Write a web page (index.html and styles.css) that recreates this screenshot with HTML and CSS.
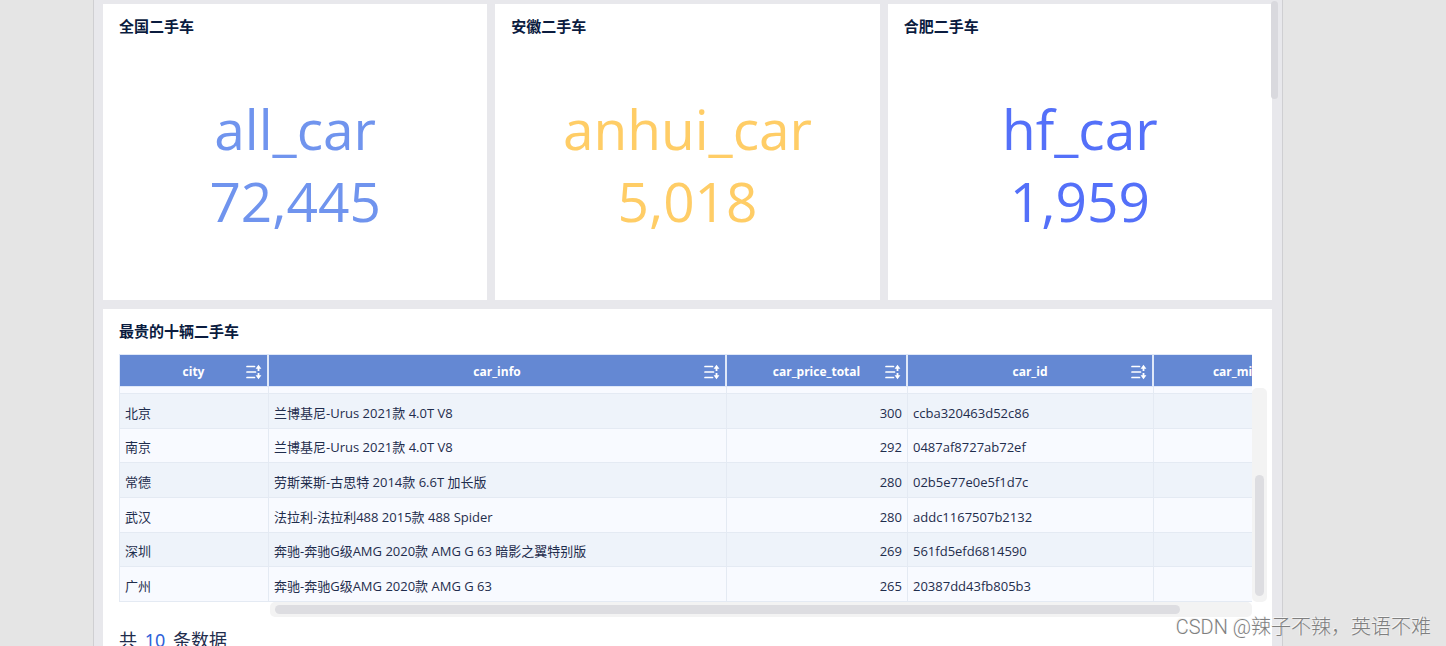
FILE: index.html
```html
<!DOCTYPE html>
<html lang="zh-CN">
<head>
<meta charset="utf-8">
<title>二手车数据</title>
<link rel="stylesheet" href="styles.css">
</head>
<body>
<svg class="defs" aria-hidden="true">
  <symbol id="sort" viewBox="0 0 16 16">
    <path d="M1 2.500h7.500M1 8h8.500M1 13.500h7.500" fill="none" stroke="currentColor" stroke-width="1.700" stroke-linecap="round"/>
    <path d="M12.500 3v4M12.500 9v4" fill="none" stroke="currentColor" stroke-width="1.800"/>
    <path d="M12.500 .7l2.900 4.100h-5.800zM12.500 15.300l2.900-4.100h-5.800z" fill="currentColor"/>
  </symbol>
</svg>
<main class="board">
  <section class="stats">
    <article class="card stat">
      <h2 class="title">全国二手车</h2>
      <div class="figure blue"><div>all_car</div><div>72,445</div></div>
    </article>
    <article class="card stat">
      <h2 class="title">安徽二手车</h2>
      <div class="figure yellow"><div>anhui_car</div><div>5,018</div></div>
    </article>
    <article class="card stat">
      <h2 class="title">合肥二手车</h2>
      <div class="figure indigo"><div>hf_car</div><div>1,959</div></div>
    </article>
  </section>
  <section class="card list">
    <h2 class="title">最贵的十辆二手车</h2>
    <div class="grid">
      <div class="viewport">
        <table class="table">
          <colgroup><col class="c-city"><col class="c-info"><col class="c-price"><col class="c-id"><col class="c-mile"></colgroup>
          <thead>
            <tr>
              <th>city<button class="sort" aria-label="city 排序"><svg><use href="#sort"/></svg></button></th>
              <th>car_info<button class="sort" aria-label="car_info 排序"><svg><use href="#sort"/></svg></button></th>
              <th>car_price_total<button class="sort" aria-label="car_price_total 排序"><svg><use href="#sort"/></svg></button></th>
              <th>car_id<button class="sort" aria-label="car_id 排序"><svg><use href="#sort"/></svg></button></th>
              <th>car_mileage</th>
            </tr>
          </thead>
          <tbody class="peek"><tr><td></td><td></td><td></td><td></td><td></td></tr></tbody>
          <tbody class="rows">
            <tr><td>北京</td><td>兰博基尼-Urus 2021款 4.0T V8</td><td class="num">300</td><td>ccba320463d52c86</td><td></td></tr>
            <tr><td>南京</td><td>兰博基尼-Urus 2021款 4.0T V8</td><td class="num">292</td><td>0487af8727ab72ef</td><td></td></tr>
            <tr><td>常德</td><td>劳斯莱斯-古思特 2014款 6.6T 加长版</td><td class="num">280</td><td>02b5e77e0e5f1d7c</td><td></td></tr>
            <tr><td>武汉</td><td>法拉利-法拉利488 2015款 488 Spider</td><td class="num">280</td><td>addc1167507b2132</td><td></td></tr>
            <tr><td>深圳</td><td>奔驰-奔驰G级AMG 2020款 AMG G 63 暗影之翼特别版</td><td class="num">269</td><td>561fd5efd6814590</td><td></td></tr>
            <tr><td>广州</td><td>奔驰-奔驰G级AMG 2020款 AMG G 63</td><td class="num">265</td><td>20387dd43fb805b3</td><td></td></tr>
          </tbody>
        </table>
      </div>
      <div class="track vertical"><div class="thumb"></div></div>
      <div class="track horizontal"><div class="thumb"></div></div>
    </div>
    <p class="total">共 <span class="count">10</span> 条数据</p>
  </section>
  <div class="page-thumb"></div>
</main>
<div class="watermark">CSDN @辣子不辣，英语不难</div>
</body>
</html>
```
FILE: styles.css
```css
* { box-sizing: border-box; }
body {
  margin: 0;
  height: 100vh;
  overflow: hidden;
  padding: 0 163px 0 93px;
  background: #e5e5e5;
  color: #1f2d4d;
  font-family: "Noto Sans", "Noto Sans CJK SC", sans-serif;
}
.defs { position: absolute; width: 0; height: 0; }
.board {
  position: relative;
  height: 100vh;
  overflow: hidden;
  padding: 4px 10px 0 9px;
  background: #e8e8ec;
  border-left: 1px solid #cfcfd2;
  border-right: 1px solid #cfcfd2;
  display: flex;
  flex-direction: column;
  gap: 9px;
}
.stats { display: grid; grid-template-columns: repeat(3, 1fr); gap: 8px; }
.card { background: #fff; padding: 11px 16px; }
.stat { height: 296px; }
.title {
  margin: 0;
  font-size: 15px;
  line-height: 22px;
  font-weight: 700;
  color: #0b1c3f;
}
.figure {
  margin-top: 56px;
  font-family: "Open Sans", "Noto Sans CJK SC", sans-serif;
  font-size: 55px;
  line-height: 72px;
  text-align: center;
}
.blue { color: #7094ee; }
.yellow { color: #ffcd66; }
.indigo { color: #5470f9; }
.list { flex: none; padding-right: 5px; }
.grid {
  margin-top: 12px;
  display: grid;
  grid-template-columns: minmax(0, 1fr) 15px;
}
.viewport { overflow: hidden; }
.table {
  table-layout: fixed;
  width: 1226px;
  border-collapse: separate;
  border-spacing: 0;
  font-family: "Open Sans", "Noto Sans CJK SC", sans-serif;
  font-size: 13px;
  line-height: 20px;
}
.c-city { width: 150px; }
.c-info { width: 458px; }
.c-price { width: 181px; }
.c-id { width: 246px; }
.c-mile { width: 191px; }
.table th {
  position: relative;
  height: 33px;
  padding: 3px 0 0;
  background: #6488d3;
  border: 1px solid #dfe8f8;
  border-width: 1px 2px 1px 0;
  color: #fff;
  font-size: 12px;
}
.table th:first-child { border-left-width: 1px; }
.sort {
  position: absolute;
  top: 9px;
  right: 5px;
  width: 16px;
  height: 16px;
  padding: 0;
  border: 0;
  background: none;
  color: #fff;
}
.sort svg { display: block; width: 16px; height: 16px; }
.table td {
  padding: 3px 5px 0;
  border-right: 1px solid #e4eaf3;
  border-bottom: 1px solid #e4eaf3;
  white-space: nowrap;
}
.table td:first-child { border-left: 1px solid #e4eaf3; }
.table .peek td { height: 7px; padding: 0; background: #f8faff; }
.rows td { height: 35px; background: #f8faff; }
.rows tr:nth-child(3n + 2) td { height: 34px; }
.rows tr:nth-child(odd) td { background: #eef3fa; }
.num { text-align: right; }
.track { background: #f3f3f3; border-radius: 5px; }
.vertical { margin-top: 34px; padding: 87px 3px 6px; }
.horizontal { margin-left: 151px; padding: 3px 72px 3px 5px; height: 15px; }
.thumb { height: 100%; border-radius: 5px; background: #dddde1; }
.total { margin: 9px 0 20px; font-size: 18px; line-height: 28px; }
.count { margin: 0 3px; color: #2f62d9; }
.page-thumb {
  position: absolute;
  top: 1px;
  right: 4px;
  width: 7px;
  height: 98px;
  border-radius: 4px;
  background: #d9d9de;
}
.watermark {
  position: absolute;
  right: 15px;
  bottom: 4px;
  font: 300 20px/30px Roboto, "Noto Sans CJK SC", sans-serif;
  color: #7f7f7f;
  text-shadow: -1px -1px 0 #f4f4f4;
}
```
